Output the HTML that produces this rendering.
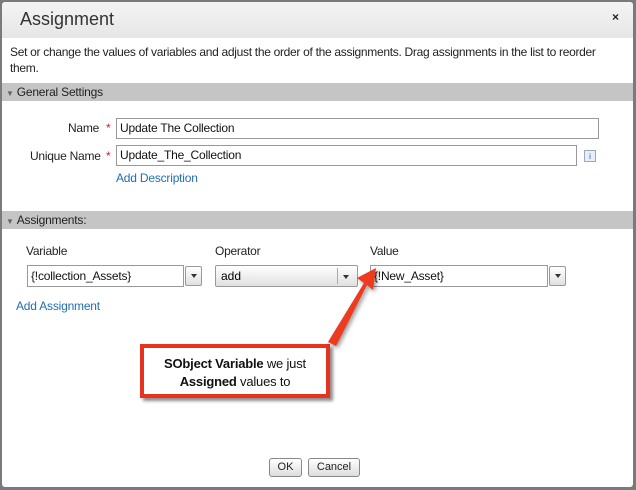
<!DOCTYPE html><html><head><style>
body{margin:0;width:636px;height:490px;background:#7a7a7a;font-family:"Liberation Sans",sans-serif;position:relative;overflow:hidden}
.d{position:absolute;left:2px;top:2px;width:631px;height:485px;background:#fff;border-radius:3px}
.a{position:absolute}
.hd{left:0;top:0;width:631px;height:36px;background:linear-gradient(#f4f4f4,#e6e6e6);border-radius:3px 3px 0 0}
.bar{left:0;width:631px;height:18px;background:#c5c5c5;font-size:12px;color:#222;line-height:18px;letter-spacing:-0.2px}
.t{font-size:12px;color:#222;letter-spacing:-0.25px}
.in{border:1px solid #999;background:#fff;height:19px;box-sizing:border-box;font-size:12px;line-height:17px;padding-left:3px;color:#111;letter-spacing:-0.2px}
.lk{color:#1f6fb2;font-size:12px;letter-spacing:-0.2px}
.st{color:#d02020;font-size:12px}
.dd{border:1px solid #999;border-radius:2px;background:linear-gradient(#fff,#e0e0e0);height:19px;box-sizing:border-box}
.ar:after{content:"";position:absolute;left:50%;top:7px;margin-left:-3px;border:3px solid transparent;border-top:4px solid #333}
.btn{border:1px solid #888;border-radius:3px;background:linear-gradient(#fff,#ddd);height:19px;box-sizing:border-box;font-size:11px;line-height:17px;text-align:center;color:#222}
</style></head><body>
<div class="d">
<div class="a hd"></div>
<div class="a" style="left:18px;top:7px;font-size:18px;color:#333">Assignment</div>
<div class="a" style="left:610px;top:8px;font-size:12px;font-weight:bold;color:#222">×</div>
<div class="a t" style="left:8px;top:42px;width:605px;line-height:16px;letter-spacing:-0.3px">Set or change the values of variables and adjust the order of the assignments. Drag assignments in the list to reorder them.</div>
<div class="a bar" style="top:81px"><span style="font-size:8px;color:#666;margin:0 3px 0 4px">▼</span>General Settings</div>
<div class="a t" style="left:66px;top:119px">Name</div>
<div class="a st" style="left:104px;top:119px">*</div>
<div class="a in" style="left:114px;top:116px;width:483px;height:21px;line-height:19px">Update The Collection</div>
<div class="a t" style="left:28px;top:147px">Unique Name</div>
<div class="a st" style="left:104px;top:147px">*</div>
<div class="a in" style="left:114px;top:143px;width:461px;height:21px;line-height:19px">Update_The_Collection</div>
<div class="a" style="left:582px;top:148px;width:12px;height:12px;border:1px solid #9ab;background:#e6eef8;font-size:8px;color:#2a5c9a;text-align:center;line-height:12px;box-sizing:border-box">i</div>
<div class="a lk" style="left:114px;top:169px">Add Description</div>
<div class="a bar" style="top:209px"><span style="font-size:8px;color:#666;margin:0 3px 0 4px">▼</span>Assignments:</div>
<div class="a t" style="left:24px;top:242px">Variable</div>
<div class="a t" style="left:213px;top:242px">Operator</div>
<div class="a t" style="left:368px;top:242px">Value</div>
<div class="a in" style="left:25px;top:263px;width:157px;height:22px;line-height:20px">{!collection_Assets}</div>
<div class="a dd ar" style="left:183px;top:264px;width:17px;height:20px"></div>
<div class="a dd" style="left:213px;top:263px;width:143px;height:22px;font-size:12px;line-height:20px;padding-left:5px">add<div class="a" style="left:121px;top:2px;width:1px;height:16px;background:#aaa"></div><div class="a" style="left:127px;top:9px;border:3px solid transparent;border-top:4px solid #333"></div></div>
<div class="a in" style="left:368px;top:263px;width:178px;height:22px;line-height:20px">{!New_Asset}</div>
<div class="a dd ar" style="left:547px;top:264px;width:17px;height:20px"></div>
<div class="a lk" style="left:14px;top:297px">Add Assignment</div>
<div class="a" style="left:138px;top:342px;width:190px;height:54px;border:4px solid #e8321e;box-sizing:border-box;box-shadow:3px 3px 3px rgba(0,0,0,.45);background:#fff;text-align:center;font-size:13px;line-height:18px;padding-top:7px;color:#111;letter-spacing:-0.2px"><b>SObject Variable</b> we just<br><b>Assigned</b> values to</div>
<svg class="a" style="left:0;top:0" width="631" height="485"><g style="filter:drop-shadow(2px 2px 2px rgba(0,0,0,.4))"><polygon points="326,340 362,281 355,276 374,266 371,288 365,283 334,344" fill="#ee3a1f"/></g></svg>
<div class="a btn" style="left:267px;top:456px;width:33px">OK</div>
<div class="a btn" style="left:306px;top:456px;width:52px">Cancel</div>
</div>
</body></html>
